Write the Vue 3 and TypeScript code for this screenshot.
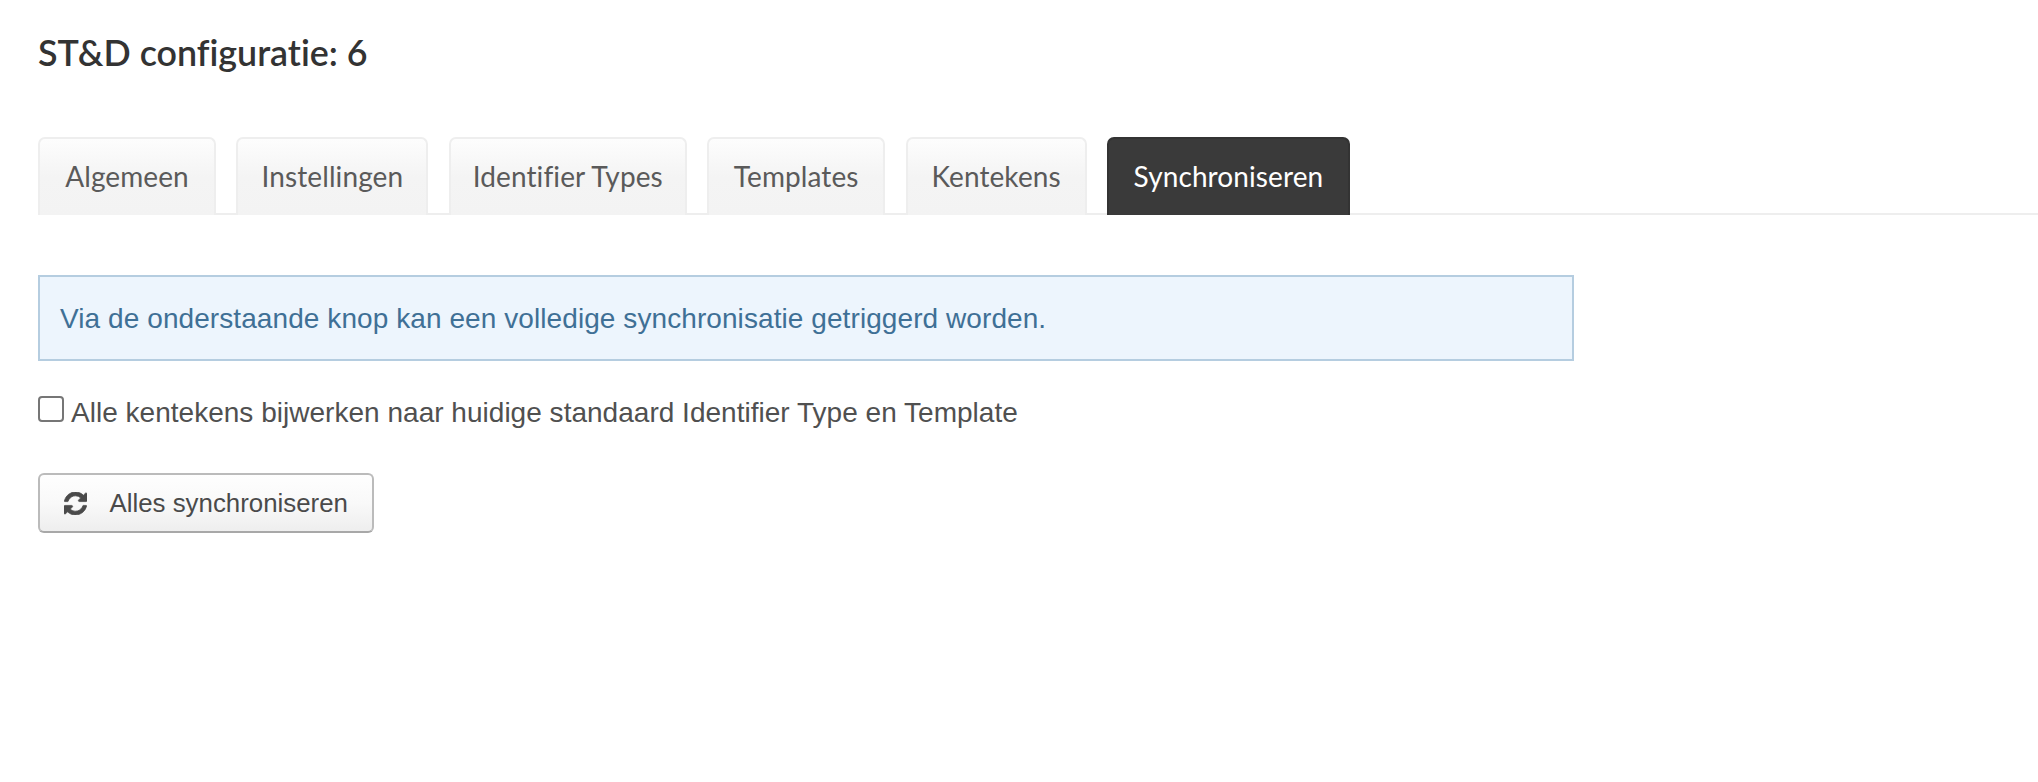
<template>
  <div class="page">
    <h2 class="title">ST&amp;D configuratie: 6</h2>

    <ul class="tabs">
      <li
        v-for="tab in tabs"
        :key="tab.label"
        class="tab"
        :class="{ active: tab.label === activeTab }"
        :style="{ width: `${tab.width}px` }"
      >
        {{ tab.label }}
      </li>
    </ul>

    <div class="alert">Via de onderstaande knop kan een volledige synchronisatie getriggerd worden.</div>

    <label class="check">
      <span class="box"></span>
      <span>Alle kentekens bijwerken naar huidige standaard Identifier Type en Template</span>
    </label>

    <button class="btn" type="button">
      <svg class="icon" viewBox="0 0 1536 1536" fill="currentColor" stroke="currentColor" stroke-width="50">
        <path d="M1511 928q0 5-1 7-64 268-268 434.500t-478 166.500q-146 0-282.500-55t-243.500-157l-129 129q-19 19-45 19t-45-19-19-45v-448q0-26 19-45t45-19h448q26 0 45 19t19 45-19 45l-137 137q71 66 161 102t187 36q134 0 250-65t186-179q11-17 53-117 8-23 30-23h192q13 0 22.500 9.500t9.500 22.500zm25-800v448q0 26-19 45t-45 19h-448q-26 0-45-19t-19-45 19-45l138-138q-148-137-349-137-134 0-250 65t-186 179q-11 17-53 117-8 23-30 23h-199q-13 0-22.500-9.500t-9.500-22.500v-7q65-268 270-434.500t480-166.500q146 0 284 55.500t245 156.500l130-129q19-19 45-19t45 19 19 45z" />
      </svg>
      <span>Alles synchroniseren</span>
    </button>
  </div>
</template>

<script setup lang="ts">
interface Tab {
  label: string
  width: number
}

const tabs: Tab[] = [
  { label: 'Algemeen', width: 178 },
  { label: 'Instellingen', width: 192 },
  { label: 'Identifier Types', width: 238 },
  { label: 'Templates', width: 178 },
  { label: 'Kentekens', width: 181 },
  { label: 'Synchroniseren', width: 243 },
]
const activeTab = 'Synchroniseren'
</script>

<style>
html,
body {
  margin: 0;
  background: #fff;
}
</style>

<style scoped>
.page {
  height: 782px;
  box-sizing: border-box;
  padding: 30px 0 0 38px;
  overflow: hidden;
  font-family: 'Liberation Sans', Arial, sans-serif;
  color: #4a4a4a;
}

.title {
  margin: 0;
  font-family: Lato, 'Noto Sans', sans-serif;
  font-size: 35.8px;
  line-height: 46px;
  font-weight: 600;
  font-variant-ligatures: none;
  color: #333;
}

.tabs {
  display: flex;
  gap: 20.4px;
  height: 76px;
  margin: 61px 0 0;
  padding: 0;
  list-style: none;
  border-bottom: 2px solid #eee;
}

.tab {
  box-sizing: border-box;
  height: 78px;
  font-family: Lato, 'Noto Sans', sans-serif;
  font-size: 28px;
  letter-spacing: 0.1px;
  font-variant-ligatures: none;
  line-height: 74px;
  text-align: center;
  color: #5a5a5a;
  white-space: nowrap;
  background: linear-gradient(180deg, #fdfdfd 0%, #f4f4f4 50%, #f3f3f3 100%);
  border: 2px solid #eee;
  border-bottom: none;
  border-radius: 7px 7px 0 0;
}

.tab.active {
  color: #fff;
  background: #3a3a3a;
  border-color: #333;
}

.alert {
  box-sizing: border-box;
  width: 1536px;
  height: 86px;
  margin-top: 60px;
  padding: 0 20px;
  font-size: 28px;
  letter-spacing: 0.08px;
  line-height: 84px;
  color: #3f7096;
  background: #edf5fd;
  border: 2px solid #b5cde0;
}

.check {
  display: flex;
  align-items: flex-start;
  gap: 7px;
  margin-top: 35px;
  font-size: 28px;
  letter-spacing: 0.02px;
  line-height: 34px;
  color: #505050;
}

.box {
  box-sizing: border-box;
  flex: none;
  width: 26px;
  height: 26px;
  background: #fff;
  border: 2px solid #767676;
  border-radius: 4px;
}

.btn {
  display: flex;
  align-items: center;
  gap: 22.5px;
  box-sizing: border-box;
  height: 60px;
  margin-top: 43px;
  padding: 0 24px;
  font-family: 'Liberation Sans', Arial, sans-serif;
  font-size: 25.85px;
  color: #4a4a4a;
  background: linear-gradient(180deg, #fefefe 0%, #f9f9f9 50%, #eee 100%);
  border: 2px solid #bbb;
  border-bottom-color: #a8a8a8;
  border-radius: 6px;
}

.icon {
  flex: none;
  width: 23px;
  height: 23px;
}
</style>
